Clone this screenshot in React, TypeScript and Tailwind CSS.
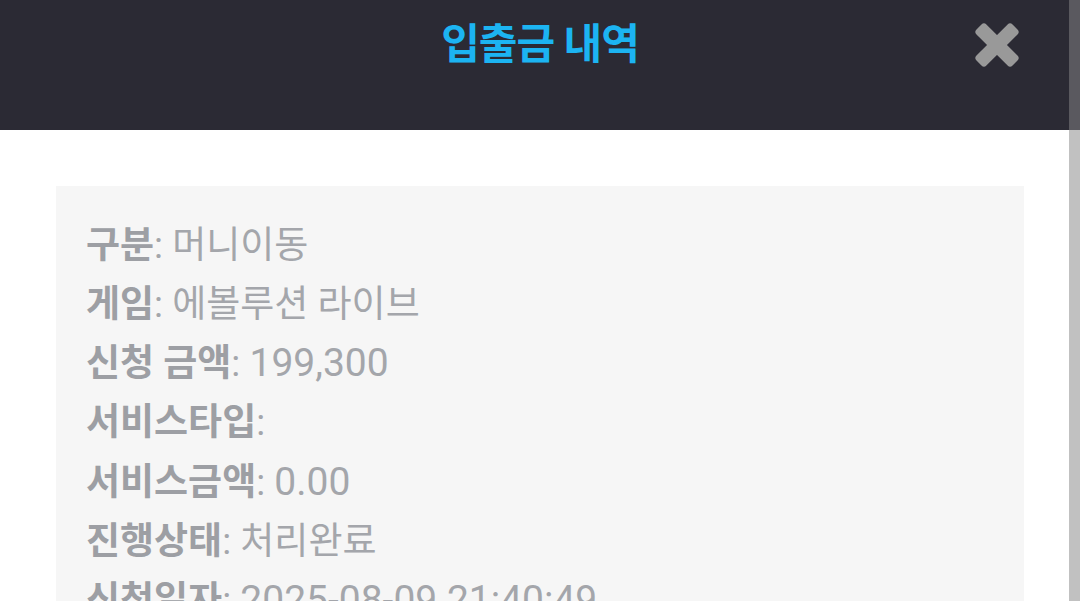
import React from "react";

const rows: { label: string; value: string; num?: boolean }[] = [
  { label: "구분", value: "머니이동" },
  { label: "게임", value: "에볼루션 라이브" },
  { label: "신청 금액", value: "199,300", num: true },
  { label: "서비스타입", value: "" },
  { label: "서비스금액", value: "0.00", num: true },
  { label: "진행상태", value: "처리완료" },
  { label: "신청일자", value: "2025-08-09 21:40:49", num: true },
];

function CloseIcon() {
  return (
    <svg width="46" height="46" viewBox="0 0 46 46" aria-hidden="true">
      <rect x="-2.5" y="16" width="51" height="14" rx="3.5" fill="#999999" transform="rotate(45 23 23)" />
      <rect x="-2.5" y="16" width="51" height="14" rx="3.5" fill="#999999" transform="rotate(-45 23 23)" />
    </svg>
  );
}

export default function App() {
  return (
    <div
      className="relative w-[1080px] h-[601px] overflow-hidden bg-white"
      style={{ fontFamily: 'Roboto, "Noto Sans CJK KR", sans-serif' }}
    >
      <header className="h-[130px] bg-[#2b2a34]">
        <div className="grid grid-cols-[1fr_auto_1fr] items-center h-[90px]">
          <div />
          <h1 className="text-[42px] font-bold text-[#1cb4f2] leading-none tracking-[-1px]">
            입출금 내역
          </h1>
          <div className="flex justify-end pr-[60px]">
            <button className="w-[46px] h-[46px] flex items-center justify-center">
              <CloseIcon />
            </button>
          </div>
        </div>
      </header>

      <main className="px-[56px] pt-[56px]">
        <div className="bg-[#f6f6f6] pl-[30px] pt-[31px] pb-6">
          {rows.map((r) => (
            <div key={r.label} className="text-[37px] leading-[58.7px] text-[#a4a6ab] whitespace-nowrap">
              <span className="font-bold text-[#9d9fa4]">{r.label}</span>
              <span>: </span>
              <span className={r.num ? "text-[39px]" : ""}>{r.value}</span>
            </div>
          ))}
        </div>
      </main>

      <div className="absolute top-0 right-0 w-[11px] h-full flex flex-col">
        <div className="h-[130px] bg-[#5a595f]" />
        <div className="flex-1 bg-[#c1c1c1]" />
      </div>
    </div>
  );
}
